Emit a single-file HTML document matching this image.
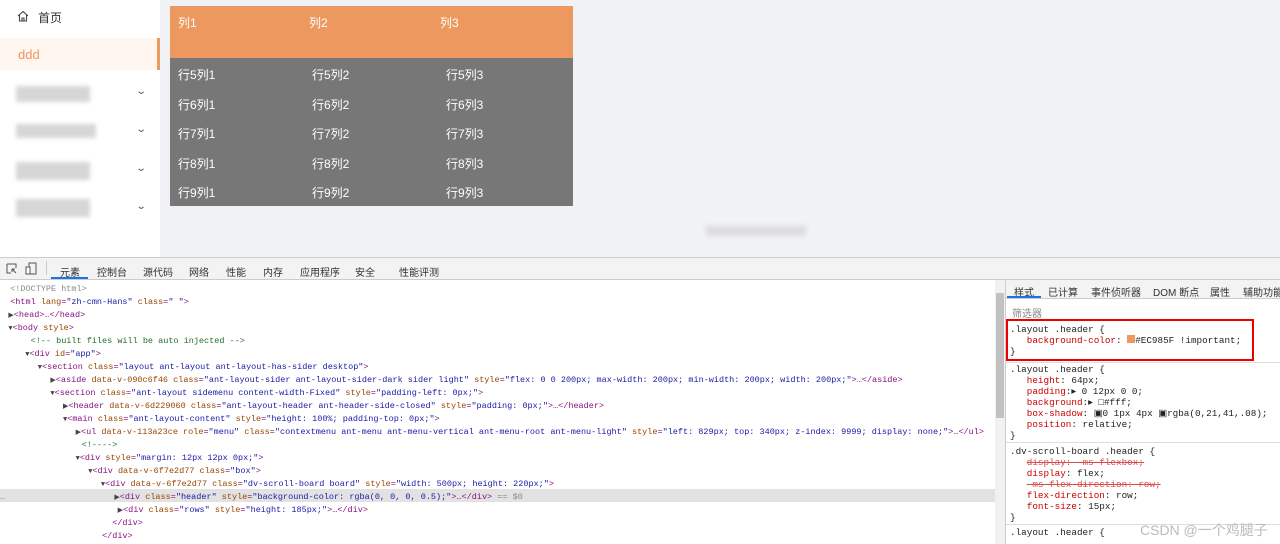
<!DOCTYPE html><html><head><style>
body{margin:0;width:1280px;height:543px;overflow:hidden;background:#f0f2f5;font-family:"Liberation Sans","Noto Sans CJK SC",sans-serif;position:relative}
.a{position:absolute}
.side{left:0;top:0;width:160px;height:257px;background:#fff}
.tbl{left:170px;top:6px;width:403px;height:200px;background:#777}
.hd{position:absolute;left:0;top:0;width:403px;height:52px;background:#EC985F}
.t{position:absolute;color:#fff;font-size:12px}
.blur{position:absolute;background:#d6d6d6;filter:blur(2px)}
.chev{position:absolute;left:137px;font-size:10px;color:#555;transform:scaleX(1.3)}
.dt{left:0;top:257px;width:1280px;height:286px;background:#fff;border-top:1px solid #ccc;overflow:hidden}
.tabs{position:absolute;left:0;top:0;width:1280px;height:21px;background:#f3f3f3;border-bottom:1px solid #ccc;font-size:10px;color:#333}
.tabs span,.rt span{position:absolute;top:6px}
.rt{position:absolute;left:1006px;top:22px;width:274px;height:18px;background:#f3f3f3;border-bottom:1px solid #ccc;font-size:10px;color:#333}
.rt span{top:4px}
.code{position:absolute;left:0;top:25px;width:995px;font-family:"Liberation Mono",monospace;font-size:8.5px;line-height:13px;color:#881280}
.code div{height:13px;white-space:pre}
.n{color:#994500}.v{color:#1a1aa6}.c{color:#236e25}.g{color:#888}.k{color:#444;font-size:7px}
.sty{position:absolute;left:1010px;width:270px;font-family:"Liberation Mono",monospace;font-size:9.3px;line-height:11px;color:#222;white-space:pre}
.p{color:#c80000}
</style></head><body>
<div class="a side">
 <svg class="a" style="left:17px;top:10px" width="12" height="12" viewBox="0 0 12 12"><path d="M1 6 L6 1.5 L11 6 M2.5 5 V11 H9.5 V5 M5 11 V8 H7 V11" fill="none" stroke="#444" stroke-width="1.1"/></svg>
 <div class="a" style="left:38px;top:9px;font-size:12px;color:#333">首页</div>
 <div class="a" style="left:0;top:38px;width:157px;height:32px;background:#fff7ef;border-right:3px solid #EC985F"></div>
 <div class="a" style="left:18px;top:47px;font-size:13px;color:#EC985F">ddd</div>
 <div class="blur" style="left:16px;top:86px;width:74px;height:16px"></div><div class="chev" style="top:86px">⌄</div>
 <div class="blur" style="left:16px;top:124px;width:80px;height:14px"></div><div class="chev" style="top:124px">⌄</div>
 <div class="blur" style="left:16px;top:162px;width:74px;height:18px"></div><div class="chev" style="top:163px">⌄</div>
 <div class="blur" style="left:16px;top:199px;width:74px;height:18px"></div><div class="chev" style="top:201px">⌄</div>
</div>
<div class="blur" style="left:706px;top:226px;width:100px;height:10px;background:#ddd"></div>
<div class="a tbl"><div class="hd"></div>
<div class="t" style="left:8px;top:8px">列1</div><div class="t" style="left:139px;top:8px">列2</div><div class="t" style="left:270px;top:8px">列3</div>
<div class="t" style="left:8px;top:60px">行5列1</div><div class="t" style="left:142px;top:60px">行5列2</div><div class="t" style="left:276px;top:60px">行5列3</div>
<div class="t" style="left:8px;top:90px">行6列1</div><div class="t" style="left:142px;top:90px">行6列2</div><div class="t" style="left:276px;top:90px">行6列3</div>
<div class="t" style="left:8px;top:119px">行7列1</div><div class="t" style="left:142px;top:119px">行7列2</div><div class="t" style="left:276px;top:119px">行7列3</div>
<div class="t" style="left:8px;top:149px">行8列1</div><div class="t" style="left:142px;top:149px">行8列2</div><div class="t" style="left:276px;top:149px">行8列3</div>
<div class="t" style="left:8px;top:178px">行9列1</div><div class="t" style="left:142px;top:178px">行9列2</div><div class="t" style="left:276px;top:178px">行9列3</div>
</div>
<div class="a dt">
<div class="tabs">
<svg class="a" style="left:6px;top:5px" width="11" height="11"><path d="M1 1H10V5M1 1V10H5 M6 6 L10 10 M6 6 V9 M6 6 H9" fill="none" stroke="#555"/></svg>
<svg class="a" style="left:25px;top:4px" width="12" height="13"><rect x="4" y="1" width="7" height="11" fill="none" stroke="#555"/><rect x="1" y="5" width="4" height="7" fill="#fff" stroke="#555"/></svg>
<div class="a" style="left:46px;top:3px;width:1px;height:14px;background:#ccc"></div>
<span style="left:60px">元素</span><div class="a" style="left:51px;top:19px;width:37px;height:2px;background:#1a73e8"></div>
<span style="left:97px">控制台</span><span style="left:143px">源代码</span><span style="left:189px">网络</span><span style="left:226px">性能</span><span style="left:263px">内存</span><span style="left:300px">应用程序</span><span style="left:355px">安全</span><span style="left:399px">性能评测</span>
</div>
<div class="a" style="left:995px;top:22px;width:10px;height:264px;background:#f1f1f1"></div>
<div class="a" style="left:996px;top:35px;width:8px;height:125px;background:#c1c1c1"></div>
<div class="a" style="left:1005px;top:22px;width:1px;height:264px;background:#ccc"></div>
<div class="rt">
<span style="left:8px">样式</span><div class="a" style="left:1px;top:16px;width:34px;height:2px;background:#1a73e8"></div>
<span style="left:42px">已计算</span><span style="left:85px">事件侦听器</span><span style="left:147px">DOM 断点</span><span style="left:204px">属性</span><span style="left:237px;white-space:nowrap">辅助功能</span>
</div>
<div class="a" style="left:0;top:231px;width:995px;height:13px;background:#e2e2e2"></div>
<div class="code">
<div class="g">  &lt;!DOCTYPE html&gt;</div>
<div>  &lt;html <span class="n">lang</span>=<span class="v">"zh-cmn-Hans"</span> <span class="n">class</span>=<span class="v">" "</span>&gt;</div>
<div><span class="k">  ▶</span>&lt;head&gt;…&lt;/head&gt;</div>
<div><span class="k">  ▼</span>&lt;body <span class="n">style</span>&gt;</div>
<div class="c">      &lt;!-- built files will be auto injected --&gt;</div>
<div><span class="k">      ▼</span>&lt;div <span class="n">id</span>=<span class="v">"app"</span>&gt;</div>
<div><span class="k">         ▼</span>&lt;section <span class="n">class</span>=<span class="v">"layout ant-layout ant-layout-has-sider desktop"</span>&gt;</div>
<div><span class="k">            ▶</span>&lt;aside <span class="n">data-v-090c6f46 class</span>=<span class="v">"ant-layout-sider ant-layout-sider-dark sider light"</span> <span class="n">style</span>=<span class="v">"flex: 0 0 200px; max-width: 200px; min-width: 200px; width: 200px;"</span>&gt;…&lt;/aside&gt;</div>
<div><span class="k">            ▼</span>&lt;section <span class="n">class</span>=<span class="v">"ant-layout sidemenu content-width-Fixed"</span> <span class="n">style</span>=<span class="v">"padding-left: 0px;"</span>&gt;</div>
<div><span class="k">               ▶</span>&lt;header <span class="n">data-v-6d229060 class</span>=<span class="v">"ant-layout-header ant-header-side-closed"</span> <span class="n">style</span>=<span class="v">"padding: 0px;"</span>&gt;…&lt;/header&gt;</div>
<div><span class="k">               ▼</span>&lt;main <span class="n">class</span>=<span class="v">"ant-layout-content"</span> <span class="n">style</span>=<span class="v">"height: 100%; padding-top: 0px;"</span>&gt;</div>
<div><span class="k">                  ▶</span>&lt;ul <span class="n">data-v-113a23ce role</span>=<span class="v">"menu"</span> <span class="n">class</span>=<span class="v">"contextmenu ant-menu ant-menu-vertical ant-menu-root ant-menu-light"</span> <span class="n">style</span>=<span class="v">"left: 829px; top: 340px; z-index: 9999; display: none;"</span>&gt;…&lt;/ul&gt;</div>
<div class="c">                &lt;!----&gt;</div>
<div><span class="k">                  ▼</span>&lt;div <span class="n">style</span>=<span class="v">"margin: 12px 12px 0px;"</span>&gt;</div>
<div><span class="k">                     ▼</span>&lt;div <span class="n">data-v-6f7e2d77 class</span>=<span class="v">"box"</span>&gt;</div>
<div><span class="k">                        ▼</span>&lt;div <span class="n">data-v-6f7e2d77 class</span>=<span class="v">"dv-scroll-board board"</span> <span class="n">style</span>=<span class="v">"width: 500px; height: 220px;"</span>&gt;</div>
<div><span class="g">…</span><span class="k">                          ▶</span>&lt;div <span class="n">class</span>=<span class="v">"header"</span> <span class="n">style</span>=<span class="v">"background-color: rgba(0, 0, 0, 0.5);"</span>&gt;…&lt;/div&gt; <span class="g">== $0</span></div>
<div><span class="k">                            ▶</span>&lt;div <span class="n">class</span>=<span class="v">"rows"</span> <span class="n">style</span>=<span class="v">"height: 185px;"</span>&gt;…&lt;/div&gt;</div>
<div>                      &lt;/div&gt;</div>
<div>                    &lt;/div&gt;</div>
</div>
<div class="a" style="left:1012px;top:47px;font-size:10px;color:#888">筛选器</div>
<div class="a" style="left:1006px;top:61px;width:248px;height:42px;border:2px solid #e00;box-sizing:border-box"></div>
<div class="sty" style="top:66px">.layout .header {
   <span class="p">background-color</span>: <span style="display:inline-block;width:8px;height:8px;background:#EC985F"></span>#EC985F !important;
}</div>
<div class="a" style="left:1006px;top:104px;width:274px;height:1px;background:#ddd"></div>
<div class="sty" style="top:106px">.layout .header {
   <span class="p">height</span>: 64px;
   <span class="p">padding</span>:▸ 0 12px 0 0;
   <span class="p">background</span>:▸ □#fff;
   <span class="p">box-shadow</span>: ▣0 1px 4px ▣rgba(0,21,41,.08);
   <span class="p">position</span>: relative;
}</div>
<div class="a" style="left:1006px;top:184px;width:274px;height:1px;background:#ddd"></div>
<div class="sty" style="top:188px">.dv-scroll-board .header {
   <s class="p" style="opacity:.7">display: -ms-flexbox;</s>
   <span class="p">display</span>: flex;
   <s class="p" style="opacity:.7">-ms-flex-direction: row;</s>
   <span class="p">flex-direction</span>: row;
   <span class="p">font-size</span>: 15px;
}</div>
<div class="a" style="left:1006px;top:266px;width:274px;height:1px;background:#ddd"></div>
<div class="sty" style="top:269px">.layout .header {</div>
<div class="a" style="left:1140px;top:262px;font-size:14px;color:#bbb">CSDN @一个鸡腿子</div>
</div>
</body></html>
